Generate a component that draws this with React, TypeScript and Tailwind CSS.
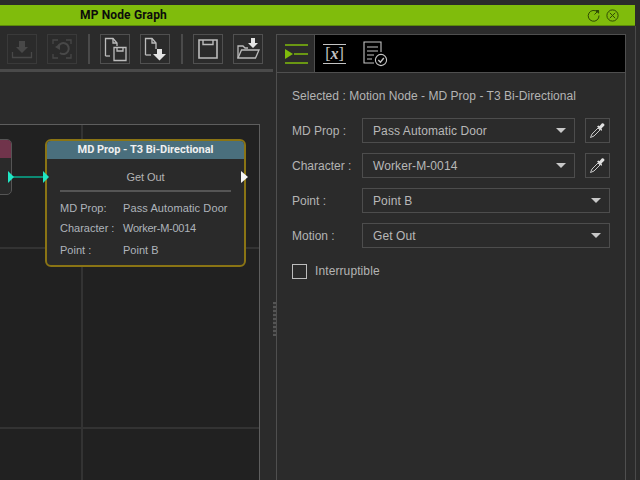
import type { ReactNode } from "react";

const FONT = "font-['Liberation_Sans',Arial,sans-serif]";

function ToolButton({ dim, children }: { dim?: boolean; children: ReactNode }) {
  return (
    <button
      className={`flex h-[30px] w-[30px] items-center justify-center border ${dim ? "border-[#3a3a3a]" : "border-[#505050]"}`}
    >
      <svg width="26" height="26" viewBox="0 0 26 26" fill="none" stroke={dim ? "#484848" : "#bcbcbc"} strokeWidth="1.3">
        {children}
      </svg>
    </button>
  );
}

function Separator() {
  return <div className="ml-[11px] mr-[10px] h-[30px] w-[2px] bg-[#4a4a4a]" />;
}

function Picker() {
  return (
    <button className="ml-[10px] flex h-[25px] w-[25px] shrink-0 items-center justify-center border border-[#4d4d4d]">
      <svg width="17" height="17" viewBox="0 0 17 17" fill="none">
        <path d="M1.5 15.5 L3 12 L9 6 L11 8 L5 14 Z" stroke="#c8c8c8" strokeWidth="1" />
        <path d="M8 4.5 L12.5 9 L13 7.4 L12.4 6.6 L15.4 3.6 A2 2 0 0 0 13 1.2 L10.4 4.2 L9.6 3.6 Z" fill="#e0e0e0" />
      </svg>
    </button>
  );
}

function Combo({ value, wide }: { value: string; wide?: boolean }) {
  return (
    <div className={`flex h-[25px] items-center justify-between border border-[#4d4d4d] pl-[10px] pr-[8px] ${wide ? "w-[248px]" : "w-[213px]"}`}>
      <span className="text-[12px] tracking-[0.1px] text-[#b8b8b8]">{value}</span>
      <span className="h-0 w-0 border-x-[5px] border-t-[5px] border-x-transparent border-t-[#c8c8c8]" />
    </div>
  );
}

function FormRow({ label, value, picker }: { label: string; value: string; picker?: boolean }) {
  return (
    <div className="flex h-[25px] items-center">
      <span className="w-[70px] shrink-0 text-[12px] text-[#b4b4b4]">{label}</span>
      <Combo value={value} wide={!picker} />
      {picker && <Picker />}
    </div>
  );
}

function NodeRow({ label, value, className }: { label: string; value: string; className: string }) {
  return (
    <div className={`flex text-[11px] leading-[14px] text-[#aeb4bb] ${className}`}>
      <span className="w-[63px] shrink-0 tracking-normal">{label}</span>
      <span className="whitespace-nowrap">{value}</span>
    </div>
  );
}

function Canvas() {
  return (
    <div className="relative h-[408px] w-[273px] bg-[#2b2b2b]">
      {/* graph area */}
      <div className="absolute left-0 top-[52px] h-[356px] w-[260px] border-r border-t border-[#5e5e5e] bg-[#212121]">
        <div className="absolute bottom-0 left-[81px] top-0 w-[2px] bg-[#333333]" />
        <div className="absolute left-0 right-0 top-[122px] h-[2px] bg-[#333333]" />
        <div className="absolute left-0 right-0 top-[302px] h-[2px] bg-[#333333]" />

        {/* previous node, cut off by the view */}
        <div className="absolute left-[-40px] top-[14px] h-[56px] w-[52px] overflow-hidden rounded-[5px] border border-[#555555] bg-[#2a2a2a]">
          <div className="h-[18px] bg-[#70344b]" />
        </div>

        {/* link between nodes */}
        <div className="absolute left-[10px] top-[51px] h-[2px] w-[36px] bg-[#0d8a74]" />
        <div className="absolute left-[8px] top-[46px] h-0 w-0 border-y-[6px] border-l-[6px] border-y-transparent border-l-[#1fe6c4]" />

        {/* selected node */}
        <div className={`absolute left-[45px] top-[14px] h-[128px] w-[201px] rounded-[6px] border-2 border-[#8a7414] bg-[#2a2a2a] ${FONT}`}>
          <div className="flex h-[18px] items-center justify-center rounded-t-[4px] bg-[#4a6f7d] font-['Roboto',sans-serif] text-[11px] font-bold text-[#f0f0f0]">
            MD Prop - T3 Bi-Directional
          </div>
          <div className="mt-[11px] text-center text-[11px] leading-[14px] tracking-[-0.1px] text-[#b4b4b4]">Get Out</div>
          <div className="mx-[13px] mt-[6px] h-[2px] bg-[#555555]" />
          <NodeRow label="MD Prop:" value="Pass Automatic Door" className="ml-[13px] mt-[9px] tracking-[0.1px]" />
          <NodeRow label="Character :" value="Worker-M-0014" className="ml-[13px] mt-[6px] tracking-[-0.25px]" />
          <NodeRow label="Point :" value="Point B" className="ml-[13px] mt-[8px]" />
        </div>
        <div className="absolute left-[43px] top-[46px] h-0 w-0 border-y-[6px] border-l-[6px] border-y-transparent border-l-[#1fe6c4]" />
        <div className="absolute left-[241px] top-[46px] h-0 w-0 border-y-[6px] border-l-[7px] border-y-transparent border-l-[#f4f4f4]" />
      </div>
    </div>
  );
}

export default function App() {
  return (
    <div className={`flex h-[480px] w-[640px] flex-col overflow-hidden bg-[#2b2b2b] pt-[5px] ${FONT}`}>
      {/* title bar */}
      <div className="flex h-[21px] w-[635px] shrink-0 items-center justify-between border-b border-[#5c8a0a] bg-[#80bc0c] pl-[80px] pr-[16px]">
        <span className="font-['Roboto',sans-serif] text-[12px] font-bold tracking-[0.15px] text-[#0c0c0c]">MP Node Graph</span>
        <div className="flex items-center gap-[6px]">
          <svg width="13" height="13" viewBox="0 0 13 13" fill="none" stroke="#2f4a05" strokeWidth="1">
            <path d="M10.6 3.2 A5.4 5.4 0 1 0 12 6.5" />
            <path d="M7.5 5.5 L11.5 1.5" />
            <path d="M8.6 1.5 H11.6 V4.4" fill="#2f4a05" />
          </svg>
          <svg width="13" height="13" viewBox="0 0 13 13" fill="none" stroke="#2f4a05" strokeWidth="1">
            <circle cx="6.5" cy="6.5" r="5.6" />
            <path d="M3.8 3.8 L9.2 9.2 M9.2 3.8 L3.8 9.2" />
          </svg>
        </div>
      </div>

      <div className="flex min-h-0 flex-1">
        {/* left column */}
        <div className="w-[273px] shrink-0">
          <div className="flex h-[43px] items-end pb-[5px] pl-[7px]">
            <div className="flex items-center">
              <ToolButton dim>
                <path d="M10 5 H16 V11 H19 L13 17 L7 11 H10 Z" fill="#484848" stroke="none" />
                <path d="M3.5 16 V21.5 H22.5 V16" />
              </ToolButton>
              <div className="w-[10px]" />
              <ToolButton dim>
                <path d="M4 8 V4 H9 M17 4 H22 V8 M4 18 V22 H9 M17 22 H22 V18" />
                <path d="M9 11 A5.5 5.5 0 1 1 11 17" strokeWidth="2" />
                <path d="M6 11 L11 8 V14 Z" fill="#484848" stroke="none" />
              </ToolButton>
              <Separator />
              <ToolButton>
                <path d="M3.5 20 V2.5 H11 L15 7 V10" />
                <path d="M11 2.5 V7 H15" />
                <path d="M3.5 20 H8" />
                <path d="M12 11.5 H24 V24.5 H12 Z" />
                <path d="M15 11.5 V15 H21 V11.5" />
              </ToolButton>
              <div className="w-[10px]" />
              <ToolButton>
                <path d="M3.5 19 V2.5 H10 L14 7 V13" />
                <path d="M10 2.5 V7 H14" />
                <path d="M3.5 19 H9" />
                <path d="M15 13 H20 V18 H24 L17.5 24.5 L11 18 H15 Z" fill="#e4e4e4" stroke="none" />
              </ToolButton>
              <Separator />
              <ToolButton>
                <path d="M4 4 H22 V22 H4 Z" strokeWidth="1.6" />
                <path d="M8 4 V8.5 H18 V4" strokeWidth="1.4" />
              </ToolButton>
              <div className="w-[10px]" />
              <ToolButton>
                <path d="M3 22 V10 H8 L10 12 H13" />
                <path d="M3 22 L6.5 14 H24 L20.5 22 Z" />
                <path d="M16 2 H20 V7 H23 L18 12 L13 7 H16 Z" fill="#e4e4e4" stroke="none" />
              </ToolButton>
            </div>
          </div>
          <div className="h-[3px] bg-[#4a4a4a]" />
          <Canvas />
        </div>

        {/* splitter grip */}
        <div className="flex w-[3px] shrink-0 flex-col pt-[276px]">
          <div className="h-[34px] w-[3px] bg-[repeating-linear-gradient(to_bottom,#555555_0,#555555_2px,#333333_2px,#333333_4px)]" />
        </div>

        {/* right panel */}
        <div className="mt-[8px] flex w-[350px] shrink-0 flex-col border-l border-r border-t border-[#4f4f4f]">
          <div className="flex h-[38px] shrink-0 border-b border-[#4f4f4f]">
            <div className="flex w-[37px] items-center justify-center">
              <svg width="24" height="20" viewBox="0 0 24 20" fill="none" stroke="#80bc0c" strokeWidth="1.5">
                <path d="M1 1 H24 M10 10 H24 M1 19 H24" />
                <path d="M1 5 L9 10 L1 15 Z" fill="#80bc0c" stroke="none" />
              </svg>
            </div>
            <div className="flex flex-1 items-center gap-[16px] border-l border-[#4f4f4f] bg-black pl-[8px]">
              <div className="flex h-[20px] w-[23px] flex-col items-center justify-center border-y border-[#c4c4c4] font-['Liberation_Serif',serif] text-[16px] leading-none text-[#c4c4c4]">
                <span>
                  [<span className="font-bold italic">x</span>]
                </span>
              </div>
              <svg width="26" height="26" viewBox="0 0 26 26" fill="none" stroke="#c4c4c4" strokeWidth="1.1">
                <path d="M12 22 H2 V1 H19 V11" />
                <path d="M5 6 H16 M5 10 H16 M5 14 H12 M5 18 H10" />
                <circle cx="19" cy="19" r="5.6" />
                <path d="M16.3 19 L18.4 21.2 L21.8 17" strokeWidth="1.4" />
              </svg>
            </div>
          </div>

          <div className="flex flex-col px-[15px]">
            <div className="mt-[16px] h-[14px] whitespace-nowrap text-[12px] leading-[14px] tracking-[0.04px] text-[#b4b4b4]">
              Selected : Motion Node - MD Prop - T3 Bi-Directional
            </div>
            <div className="mt-[15px] flex flex-col gap-[10px]">
              <FormRow label="MD Prop :" value="Pass Automatic Door" picker />
              <FormRow label="Character :" value="Worker-M-0014" picker />
              <FormRow label="Point :" value="Point B" />
              <FormRow label="Motion :" value="Get Out" />
            </div>
            <label className="mt-[14px] flex items-center gap-[8px]">
              <span className="h-[15px] w-[15px] border border-[#bdbdbd]" />
              <span className="text-[12px] tracking-[0.1px] text-[#b4b4b4]">Interruptible</span>
            </label>
          </div>
        </div>

        {/* outer frame strip */}
        <div className="ml-[9px] w-[1px] shrink-0 bg-[#4a4a4a]" />
      </div>
    </div>
  );
}
